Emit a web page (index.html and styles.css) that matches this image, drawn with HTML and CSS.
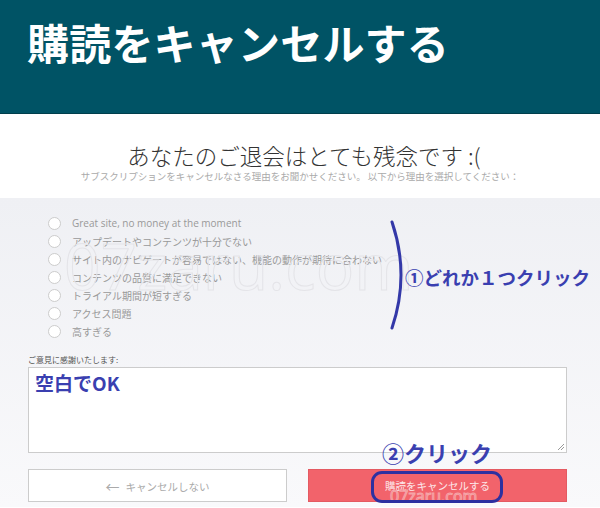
FILE: index.html
```html
<!DOCTYPE html>
<html lang="ja">
<head>
    <meta charset="UTF-8">
    <meta name="viewport" content="width=device-width, initial-scale=1.0">
    <title>購読をキャンセルする</title>
    <link rel="stylesheet" href="styles.css">
</head>
<body>
    <div class="page">
        <!-- 上部ヘッダー -->
        <header class="top">
            <h1 class="title">購読をキャンセルする</h1>
        </header>

        <!-- 案内文 -->
        <section class="intro">
            <h2 class="sorry">あなたのご退会はとても残念です :(</h2>
            <p class="lead">サブスクリプションをキャンセルなさる理由をお聞かせください。 以下から理由を選択してください：</p>
        </section>

        <!-- 理由フォーム -->
        <section class="form">
            <ul class="reasons">
                <li><span class="radio"></span>Great site, no money at the moment</li>
                <li><span class="radio"></span>アップデートやコンテンツが十分でない</li>
                <li><span class="radio"></span>サイト内のナビゲートが容易ではない、機能の動作が期待に合わない</li>
                <li><span class="radio"></span>コンテンツの品質に満足できない</li>
                <li><span class="radio"></span>トライアル期間が短すぎる</li>
                <li><span class="radio"></span>アクセス問題</li>
                <li><span class="radio"></span>高すぎる</li>
            </ul>

            <p class="note">ご意見に感謝いたします:</p>
            <div class="comment">
                <span class="ok">空白でOK</span>
                <svg class="grip" width="8" height="8" viewBox="0 0 8 8">
                    <path d="M7 1 L1 7 M7 4 L4 7" stroke="#999" stroke-width="1"></path>
                </svg>
            </div>

            <div class="btns">
                <button class="btn keep"><span class="arrow">←</span>キャンセルしない</button>
                <button class="btn quit">購読をキャンセルする</button>
            </div>
        </section>

        <!-- 透かし・説明の書き込み -->
        <div class="mark big">07zaru.com</div>
        <div class="mark small">07zaru.com</div>

        <svg class="brace" width="20" height="112" viewBox="0 0 20 112">
            <path d="M7 3 Q 25 56 7 109" fill="none" stroke="#3338a8" stroke-width="3" stroke-linecap="round"></path>
        </svg>
        <div class="memo one">①どれか１つクリック</div>
        <div class="memo two">②クリック</div>
        <div class="ring"></div>
    </div>
</body>
</html>
```

FILE: styles.css
```css
html,body{
    margin: 0;
    padding: 0;
}
body{
    font-family: "Noto Sans CJK JP", "Noto Sans", sans-serif;
    background: #fff;
}
.page{
    position: relative;
    width: 600px;
    height: 508px;
    overflow: hidden;
}

/* ヘッダー */
.top{
    height: 114px;
    background: #005365;
    border-bottom: 1px solid #003e4b;
    padding: 20px 0 0 27px;
    box-sizing: border-box;
}
.title{
    margin: 0;
    font-size: 42px;
    line-height: 44px;
    font-weight: 700;
    color: #fff;
    letter-spacing: 0.2px;
}

/* 案内文 */
.intro{
    height: 84px;
    box-sizing: border-box;
    padding-top: 28px;
    text-align: center;
}
.sorry{
    margin: 0;
    font-size: 22.5px;
    line-height: 26px;
    font-weight: 300;
    color: #333;
    padding-left: 8px;
}
.lead{
    margin: 2px 0 0;
    font-size: 9.5px;
    line-height: 12px;
    color: #aaa;
}

/* フォーム */
.form{
    height: 309px;
    box-sizing: border-box;
    padding: 16px 33px 0 28px;
    background: linear-gradient(to bottom, #eff0f4, #f9f9fb);
}
.reasons{
    list-style: none;
    margin: 0;
    padding: 0 0 0 20px;
}
.reasons li{
    display: flex;
    align-items: center;
    gap: 11px;
    height: 18px;
    font-family: "Open Sans", "Noto Sans CJK JP", sans-serif;
    font-size: 10px;
    color: #999;
}
.radio{
    width: 11px;
    height: 11px;
    border: 1px solid #ccc;
    border-radius: 50%;
    background: #fff;
    flex: none;
}
.note{
    margin: 15px 0 0;
    font-size: 8px;
    line-height: 10px;
    color: #555;
}
.comment{
    position: relative;
    height: 86px;
    margin-top: 2px;
    box-sizing: border-box;
    border: 1px solid #ccc;
    background: #fff;
    padding: 3px 6px;
}
.ok{
    font-size: 19px;
    line-height: 24px;
    font-weight: 700;
    color: #3a3fb0;
}
.grip{
    position: absolute;
    right: 1px;
    bottom: 1px;
}

/* ボタン */
.btns{
    display: flex;
    gap: 21px;
    margin-top: 16px;
}
.btn{
    flex: 1;
    height: 33px;
    border: 1px solid #ccc;
    font-family: "Noto Sans CJK JP", sans-serif;
    font-size: 10.5px;
}
.keep{
    background: #fff;
    color: #aaa;
}
.arrow{
    font-size: 14px;
    margin-right: 6px;
    vertical-align: -1px;
}
.quit{
    background: #f2636b;
    border-color: #e45a62;
    color: #fde8ea;
}

/* 透かし */
.mark{
    position: absolute;
    font-family: "Open Sans", sans-serif;
    color: transparent;
    -webkit-text-stroke: 1px #e4e4e8;
    pointer-events: none;
}
.big{
    left: 64px;
    top: 226px;
    font-size: 64px;
    line-height: 80px;
    font-weight: 400;
}
.small{
    left: 390px;
    top: 487px;
    font-size: 16px;
    line-height: 18px;
    -webkit-text-stroke: 1px #f5a3a7;
}

/* 書き込み */
.brace{
    position: absolute;
    left: 385px;
    top: 219px;
}
.memo{
    position: absolute;
    font-weight: 700;
    color: #3a3fb0;
    white-space: nowrap;
}
.one{
    left: 405px;
    top: 264px;
    font-size: 18.5px;
    line-height: 26px;
}
.two{
    left: 382px;
    top: 438px;
    font-size: 22px;
    line-height: 28px;
}
.ring{
    position: absolute;
    left: 371px;
    top: 471px;
    width: 126px;
    height: 26px;
    border: 3px solid #2d30a0;
    border-radius: 11px;
}
```
